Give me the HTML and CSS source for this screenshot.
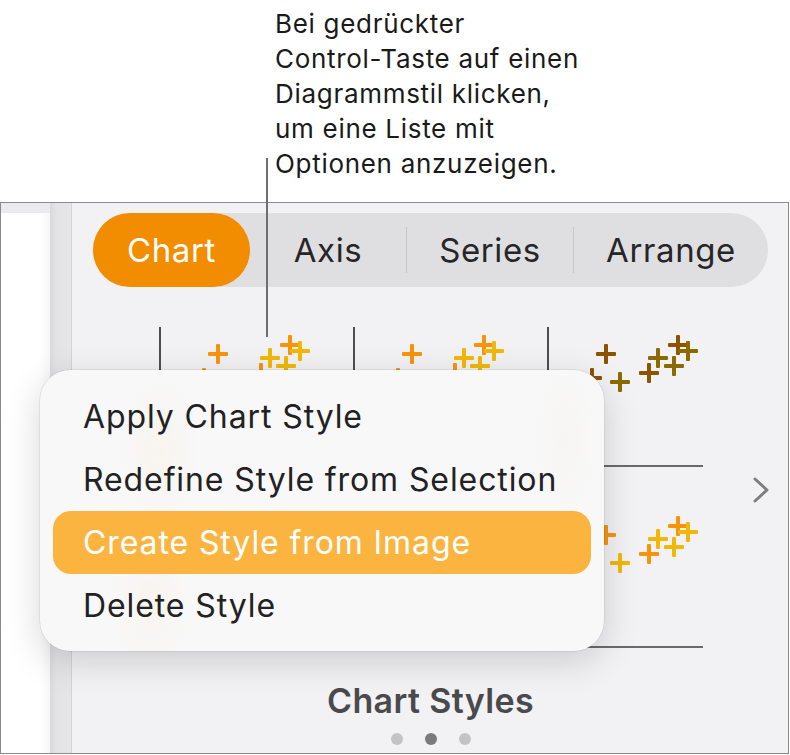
FILE: index.html
```html
<!DOCTYPE html>
<html lang="de">
<head>
<meta charset="utf-8">
<title>Chart Styles</title>
<link rel="stylesheet" href="styles.css">
</head>
<body>
<div class="page">
  <div class="callout">
    <p class="callout-text">Bei gedrückter<br>Control-Taste auf einen<br>Diagrammstil klicken,<br>um eine Liste mit<br>Optionen anzuzeigen.</p>
  </div>

  <div class="window">
    <div class="doc-area">
      <div class="doc-page"></div>
      <div class="doc-gutter"></div>
    </div>
    <div class="sidebar">
      <div class="tabs">
        <div class="tab tab-chart active">Chart</div>
        <div class="tab tab-axis">Axis</div>
        <div class="sep"></div>
        <div class="tab tab-series">Series</div>
        <div class="sep"></div>
        <div class="tab tab-arrange">Arrange</div>
      </div>

      <div class="styles">
        <div class="style-grid">
          <div class="thumb">
            <span class="pt a" style="left:33px;top:41px"></span>
            <span class="pt a" style="left:47px;top:17px"></span>
            <span class="pt b" style="left:61px;top:45px"></span>
            <span class="pt a" style="left:90px;top:36px"></span>
            <span class="pt b" style="left:99px;top:21px"></span>
            <span class="pt b" style="left:115px;top:29px"></span>
            <span class="pt a" style="left:119px;top:8px"></span>
            <span class="pt b" style="left:129px;top:14px"></span>
          </div>
          <div class="thumb">
            <span class="pt a" style="left:33px;top:41px"></span>
            <span class="pt a" style="left:47px;top:17px"></span>
            <span class="pt b" style="left:61px;top:45px"></span>
            <span class="pt a" style="left:90px;top:36px"></span>
            <span class="pt b" style="left:99px;top:21px"></span>
            <span class="pt b" style="left:115px;top:29px"></span>
            <span class="pt a" style="left:119px;top:8px"></span>
            <span class="pt b" style="left:129px;top:14px"></span>
          </div>
          <div class="thumb dark">
            <span class="pt a" style="left:33px;top:41px"></span>
            <span class="pt a" style="left:47px;top:17px"></span>
            <span class="pt b" style="left:61px;top:45px"></span>
            <span class="pt a" style="left:90px;top:36px"></span>
            <span class="pt b" style="left:99px;top:21px"></span>
            <span class="pt b" style="left:115px;top:29px"></span>
            <span class="pt a" style="left:119px;top:8px"></span>
            <span class="pt b" style="left:129px;top:14px"></span>
          </div>
          <div class="thumb">
            <span class="pt a" style="left:33px;top:41px"></span>
            <span class="pt a" style="left:47px;top:17px"></span>
            <span class="pt b" style="left:61px;top:45px"></span>
            <span class="pt a" style="left:90px;top:36px"></span>
            <span class="pt b" style="left:99px;top:21px"></span>
            <span class="pt b" style="left:115px;top:29px"></span>
            <span class="pt a" style="left:119px;top:8px"></span>
            <span class="pt b" style="left:129px;top:14px"></span>
          </div>
          <div class="thumb">
            <span class="pt a" style="left:33px;top:41px"></span>
            <span class="pt a" style="left:47px;top:17px"></span>
            <span class="pt b" style="left:61px;top:45px"></span>
            <span class="pt a" style="left:90px;top:36px"></span>
            <span class="pt b" style="left:99px;top:21px"></span>
            <span class="pt b" style="left:115px;top:29px"></span>
            <span class="pt a" style="left:119px;top:8px"></span>
            <span class="pt b" style="left:129px;top:14px"></span>
          </div>
          <div class="thumb">
            <span class="pt a" style="left:33px;top:41px"></span>
            <span class="pt a" style="left:47px;top:17px"></span>
            <span class="pt b" style="left:61px;top:45px"></span>
            <span class="pt a" style="left:90px;top:36px"></span>
            <span class="pt b" style="left:99px;top:21px"></span>
            <span class="pt b" style="left:115px;top:29px"></span>
            <span class="pt a" style="left:119px;top:8px"></span>
            <span class="pt b" style="left:129px;top:14px"></span>
          </div>
        </div>
        <svg class="chevron" width="17" height="28" viewBox="0 0 17 28" aria-hidden="true">
          <polyline points="3,3 15,14 3,25" fill="none" stroke="#7e7e80" stroke-width="3" stroke-linecap="round" stroke-linejoin="round"/>
        </svg>
      </div>

      <div class="section-title">Chart Styles</div>
      <div class="dots">
        <span class="dot"></span>
        <span class="dot current"></span>
        <span class="dot"></span>
      </div>
    </div>
  </div>

  <div class="leader"></div>

  <div class="menu">
    <div class="menu-item">Apply Chart Style</div>
    <div class="menu-item">Redefine Style from Selection</div>
    <div class="menu-item selected">Create Style from Image</div>
    <div class="menu-item">Delete Style</div>
  </div>
</div>
</body>
</html>
```

FILE: styles.css
```css
* {
  box-sizing: border-box;
}

html,
body {
  margin: 0;
  padding: 0;
  background: #ffffff;
}

body {
  font-family: Inter, "Noto Sans", "Liberation Sans", sans-serif;
  color: #1d1d1f;
}

.page {
  position: relative;
  width: 790px;
  height: 755px;
  overflow: hidden;
}

/* Callout */
.callout {
  height: 202px;
  padding: 6px 0 0 275px;
}

.callout-text {
  margin: 0;
  font-size: 26px;
  line-height: 35px;
  letter-spacing: 0.7px;
  color: #1a1a1a;
}

.leader {
  position: absolute;
  left: 266px;
  top: 158px;
  width: 2px;
  height: 179px;
  background: #6f6f6f;
}

/* Window */
.window {
  width: 789px;
  height: 552px;
  border: 1px solid #8b8b8b;
  display: flex;
}

.doc-area {
  flex: 0 0 71px;
  display: flex;
  background: #ebebed;
  border-right: 1px solid #d4d4d7;
}

.doc-page {
  width: 49px;
  margin-top: 10px;
  background: linear-gradient(90deg, #ffffff 0%, #ffffff 80%, #f7f7f7 100%);
}

.doc-gutter {
  flex: 1;
  background: linear-gradient(90deg, #d9d9dc 0%, #e3e3e6 30%, #e6e6e9 100%);
}

.sidebar {
  flex: 1 1 0;
  min-width: 0;
  background: #f2f2f4;
  padding: 10px 20px 0 21px;
  display: flex;
  flex-direction: column;
}

/* Segmented tabs */
.tabs {
  height: 74px;
  border-radius: 37px;
  background: #dfdfe2;
  display: flex;
  align-items: center;
}

.tab {
  height: 74px;
  display: flex;
  align-items: center;
  justify-content: center;
  font-size: 33px;
  font-weight: 400;
  letter-spacing: 0.6px;
  color: #262628;
}

.tab-chart { width: 157px; }
.tab-axis { width: 156px; }
.tab-series { width: 166px; }
.tab-arrange { width: 194px; }

.tab.active {
  background: #f28c00;
  color: #ffffff;
  border-radius: 37px;
}

.sep {
  width: 1px;
  height: 46px;
  background: #c6c6c9;
}

/* Chart styles grid */
.styles {
  margin-top: 40px;
  margin-left: 66px;
  display: flex;
  align-items: center;
}

.style-grid {
  flex: 0 0 auto;
  display: grid;
  grid-template-columns: repeat(3, 156px);
  column-gap: 38px;
  row-gap: 41px;
}

.thumb {
  position: relative;
  height: 140px;
  border-left: 2px solid #4e4e50;
  border-bottom: 2px solid #6a6a6c;
}

.pt {
  position: absolute;
  width: 20px;
  height: 20px;
}

.pt::before,
.pt::after {
  content: "";
  position: absolute;
  border-radius: 1px;
}

.pt::before {
  left: 0;
  top: 8px;
  width: 20px;
  height: 4px;
}

.pt::after {
  left: 8px;
  top: 0;
  width: 4px;
  height: 20px;
}

.pt.a::before,
.pt.a::after {
  background: #f7940c;
}

.pt.b::before,
.pt.b::after {
  background: #f2b807;
}

.thumb.dark .pt.a::before,
.thumb.dark .pt.a::after {
  background: #8c5300;
}

.thumb.dark .pt.b::before,
.thumb.dark .pt.b::after {
  background: #8b6b00;
}

.chevron {
  flex: 0 0 auto;
  margin-left: 49px;
  margin-top: 4px;
}

/* Footer */
.section-title {
  margin-top: 33px;
  text-align: center;
  font-size: 34px;
  line-height: 40px;
  letter-spacing: 0.35px;
  font-weight: 600;
  color: #4a4a4c;
}

.dots {
  margin-top: 12px;
  display: flex;
  justify-content: center;
  gap: 22px;
}

.dot {
  width: 12px;
  height: 12px;
  border-radius: 50%;
  background: #c3c3c5;
}

.dot.current {
  background: #7b7b7d;
}

/* Context menu */
.menu {
  position: absolute;
  left: 40px;
  top: 370px;
  width: 564px;
  height: 281px;
  padding: 14.5px 13px;
  border-radius: 30px;
  background:
    radial-gradient(ellipse 40px 70px at 120px 80px, rgba(255, 200, 130, 0.09), transparent),
    radial-gradient(ellipse 40px 70px at 110px 230px, rgba(255, 200, 130, 0.08), transparent),
    radial-gradient(ellipse 30px 70px at 525px 70px, rgba(225, 205, 170, 0.08), transparent),
    #f8f8f8;
  box-shadow: 0 0 0 0.5px rgba(0, 0, 0, 0.12), 0 10px 36px rgba(0, 0, 0, 0.16);
}

.menu-item {
  height: 63px;
  padding-left: 30px;
  display: flex;
  align-items: center;
  border-radius: 18px;
  font-size: 32px;
  letter-spacing: 0.9px;
  color: #222224;
}

.menu-item.selected {
  background: #fbb43f;
  color: #ffffff;
}
```
